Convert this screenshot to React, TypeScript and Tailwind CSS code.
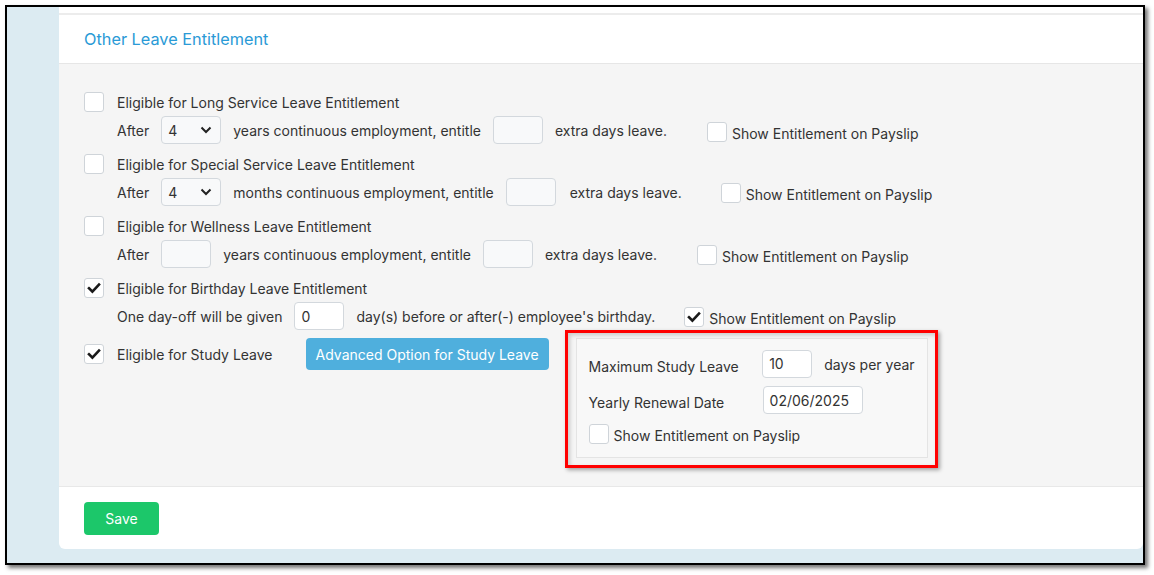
import { ReactNode } from 'react';

function Box({ checked = false }: { checked?: boolean }) {
  return (
    <span className="flex h-[20px] w-[20px] shrink-0 items-center justify-center rounded-[3px] border border-[#cfd4d9] bg-white">
      {checked && (
        <svg width="14" height="14" viewBox="0 0 14 14">
          <path d="M2 7.3 L5.4 10.6 L12 3.6" fill="none" stroke="#1a1a1a" strokeWidth="2.6" strokeLinecap="square" />
        </svg>
      )}
    </span>
  );
}

function Select({ value }: { value: string }) {
  return (
    <div className="flex h-[28px] w-[60px] shrink-0 items-center justify-between rounded-[4px] border border-[#d3d8dd] bg-[#f8f9fa] pl-[6px] pr-[8px]">
      <span>{value}</span>
      <svg width="12" height="8" viewBox="0 0 12 8">
        <path d="M1.5 1.5 L6 6 L10.5 1.5" fill="none" stroke="#222" strokeWidth="2" />
      </svg>
    </div>
  );
}

function Input({ value = '', w = 'w-[50px]', filled = false }: { value?: string; w?: string; filled?: boolean }) {
  return (
    <div className={`${w} flex h-[28px] shrink-0 items-center rounded-[4px] border border-[#d3d8dd] px-[6px] ${filled ? 'bg-white' : 'bg-[#f8f9fa]'}`}>
      {value}
    </div>
  );
}

function Payslip({ checked = false, className = '' }: { checked?: boolean; className?: string }) {
  return (
    <div className={`flex h-[20px] items-center gap-[5px] whitespace-nowrap ${className}`}>
      <Box checked={checked} />
      <span className="pt-[2px]">Show Entitlement on Payslip</span>
    </div>
  );
}

function Group({ label, checked = false, last = false, children }: { label: string; checked?: boolean; last?: boolean; children: ReactNode }) {
  return (
    <div className={last ? 'mb-[8px]' : 'mb-[10px]'}>
      <div className="flex h-[20px] items-center gap-[13px]">
        <Box checked={checked} />
        <span>{label}</span>
      </div>
      <div className="mt-[4px] flex h-[28px] items-center gap-3 whitespace-nowrap pl-[33px]">{children}</div>
    </div>
  );
}

export default function App() {
  return (
    <div className="h-[575px] w-[1154px] bg-white pl-[5px] pt-[5px] font-['Inter',sans-serif] text-[14px] text-[#333]">
      <div className="flex h-[560px] w-[1140px] overflow-hidden border-[2px] border-black bg-[#dcebf2] pl-[52px] shadow-[3px_3px_4px_rgba(0,0,0,0.55)]">
        <div className="mb-[14px] flex flex-1 flex-col rounded-b-[6px] bg-white">
          <div className="h-[6px]" />
          <div className="h-[2px] bg-[#ececec]" />
          <div className="flex h-[49px] items-center border-b border-[#e6e6e6] pl-[25px] pt-[1px] text-[16.3px] text-[#2a9ad6]">
            Other Leave Entitlement
          </div>
          <div className="flex-1 border-b border-[#e8e8e8] bg-[#f5f5f5] pl-[25px] pt-[28px]">
            <Group label="Eligible for Long Service Leave Entitlement">
              <span>After</span>
              <Select value="4" />
              <span>years continuous employment, entitle</span>
              <Input />
              <span>extra days leave.</span>
              <Payslip className="ml-[28px] mt-[4px]" />
            </Group>
            <Group label="Eligible for Special Service Leave Entitlement">
              <span>After</span>
              <Select value="4" />
              <span>months continuous employment, entitle</span>
              <Input />
              <span className="ml-[2px]">extra days leave.</span>
              <Payslip className="ml-[27px] mt-[2px]" />
            </Group>
            <Group label="Eligible for Wellness Leave Entitlement">
              <span>After</span>
              <Input />
              <span>years continuous employment, entitle</span>
              <Input />
              <span>extra days leave.</span>
              <Payslip className="ml-[28px] mt-[2px]" />
            </Group>
            <Group label="Eligible for Birthday Leave Entitlement" checked last>
              <span>One day-off will be given</span>
              <Input value="0" filled />
              <span>day(s) before or after(-) employee's birthday.</span>
              <Payslip checked className="ml-[17px] mt-[2px]" />
            </Group>
            <div className="flex items-start">
              <div className="flex h-[32px] items-center">
                <Box checked />
                <span className="ml-[13px]">Eligible for Study Leave</span>
                <button className="ml-[33px] h-[32px] rounded-[4px] bg-[#4fafdd] px-[10px] text-[14px] text-white">
                  Advanced Option for Study Leave
                </button>
              </div>
              <div className="relative ml-[27px] w-[352px] border border-[#e4e4e4] bg-[#f8f8f8] px-[12px] pb-[13px] pt-[10px]">
                <div className="pointer-events-none absolute bottom-[-11px] left-[-12px] right-[-11px] top-[-9px] border-[3px] border-[#ff0000] shadow-[2px_2px_4px_rgba(0,0,0,0.35),inset_2px_2px_4px_rgba(0,0,0,0.18)]" />
                <div className="flex h-[29px] items-center whitespace-nowrap">
                  <span className="w-[174px] pt-[6px]">Maximum Study Leave</span>
                  <Input value="10" filled />
                  <span className="ml-3 pt-[2px]">days per year</span>
                </div>
                <div className="mt-[8px] flex h-[28px] items-center">
                  <span className="w-[174px] pt-[4px]">Yearly Renewal Date</span>
                  <Input value="02/06/2025" w="w-[100px]" filled />
                </div>
                <Payslip className="mt-[10px]" />
              </div>
            </div>
          </div>
          <div className="flex h-[62px] items-center pl-[25px]">
            <button className="h-[33px] w-[75px] rounded-[4px] bg-[#1cc76a] text-[14px] text-white">Save</button>
          </div>
        </div>
      </div>
    </div>
  );
}
